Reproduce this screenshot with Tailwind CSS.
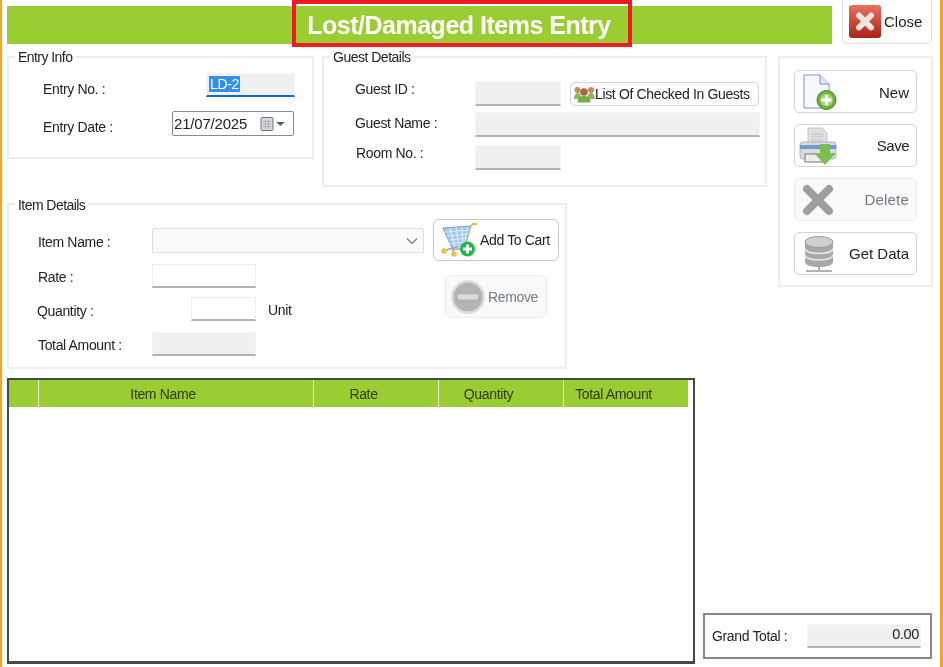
<!DOCTYPE html>
<html><head><meta charset="utf-8"><script src="https://cdn.jsdelivr.net/npm/@tailwindcss/browser@4"></script></head>
<body class="m-0 bg-white">
<div class="relative w-[943px] h-[667px] overflow-hidden bg-white blur-[0.35px] font-['Liberation_Sans',sans-serif] text-[14px] leading-[16px] tracking-[-0.35px] text-[#222]">
  <div class="absolute left-0 top-0 bottom-0 w-[2px] bg-[#f5a623]"></div>
  <div class="absolute right-0 top-0 bottom-0 w-[3px] bg-[#f5a623]"></div>

  <div class="pl-[7px] flex flex-col h-full">
    <!-- header -->
    <div class="flex h-[56px] shrink-0">
      <div class="relative w-[825px] h-[38px] mt-[6px] bg-[#9acd32] shrink-0">
        <div class="absolute left-[285px] top-[-6px] w-[340px] h-[47px] border-[4px] border-[#ed1c24] flex items-center justify-center pr-[6px] pt-[3px] text-white font-bold text-[25px] tracking-[-0.5px]">Lost/Damaged Items Entry</div>
      </div>
      <button class="ml-[10px] w-[90px] h-[45px] -mt-px bg-white border border-[#dcdcdc] rounded-b-[5px] flex items-center pl-[6px] gap-[3px] text-[15px] tracking-[0px]">
        <svg width="32" height="33" viewBox="0 0 32 33"><defs><linearGradient id="r" x1="0" y1="0" x2="0" y2="1"><stop offset="0" stop-color="#e8705f"/><stop offset="1" stop-color="#aa2318"/></linearGradient></defs><rect width="32" height="33" rx="3" fill="url(#r)"/><path d="M10 10.5L22 22.5M22 10.5L10 22.5" stroke="#f3e3e0" stroke-width="6" stroke-linecap="round"/></svg>
        <span>Close</span>
      </button>
    </div>

    <!-- upper area -->
    <div class="flex h-[322px] shrink-0">
      <div class="w-[760px] shrink-0 flex flex-col">
        <div class="flex items-start gap-[8px]">
          <!-- entry info -->
          <div class="relative w-[307px] h-[103px] border-2 border-[#ececec] pt-[15px] pl-[34px]">
            <span class="absolute left-[6px] top-[-9px] bg-white px-[3px] tracking-[-0.55px]">Entry Info</span>
            <div class="flex items-center h-[24px]">
              <span class="w-[163px] pt-[8px]">Entry No. :</span>
              <div class="w-[89px] h-[24px] bg-[#f0f0f0] border border-[#f4f4f4] border-b-2 border-b-[#0a6cc4] pl-[2px] pt-[2px]"><span class="inline-block bg-[#3390ec] text-white px-[1px] h-[16px]">LD-2</span></div>
            </div>
            <div class="flex items-center h-[25px] mt-[14px]">
              <span class="w-[129px] pt-[7px]">Entry Date :</span>
              <div class="w-[122px] h-[25px] border border-[#8a8a8a] rounded-[2px] flex items-center pl-[1px] text-[15px] tracking-[-0.2px]">
                <span>21/07/2025</span>
                <svg class="ml-[13px]" width="30" height="16" viewBox="0 0 30 16"><rect x="1" y="1.5" width="12" height="13" rx="1" fill="#d8dade" stroke="#6d7278"/><path d="M3 5.5h8M3 8h8M3 10.5h8M5.5 4v9M8.5 4v9" stroke="#a4a9b0" stroke-width=".8"/><path d="M16 6h9l-4.5 4z" fill="#4f6478"/></svg>
              </div>
            </div>
          </div>
          <!-- guest details -->
          <div class="relative w-[445px] h-[131px] border-2 border-[#ececec] pt-[23px] pl-[31px]">
            <span class="absolute left-[6px] top-[-9px] bg-white px-[3px] tracking-[-0.5px]">Guest Details</span>
            <div class="flex items-center h-[25px]">
              <span class="w-[120px] pb-[10px]">Guest ID :</span>
              <div class="w-[86px] h-[25px] bg-[#f0f0f0] border border-[#f4f4f4] border-b-2 border-b-[#b4b4b4]"></div>
              <button class="ml-[9px] w-[189px] h-[24px] bg-white border border-[#d4d4d4] rounded-[5px] flex items-center pl-[3px] gap-0">
                <svg width="21" height="18" viewBox="0 0 21 18"><circle cx="3.500" cy="5" r="3" fill="#c98a5a"/><circle cx="17" cy="5" r="3" fill="#c98a5a"/><path d="M0 14c0-4 1.500-6 3.500-6s4 2 4 6zM13 14c0-4 2-6 4-6s4 2 4 6z" fill="#8cb85a"/><circle cx="10" cy="7" r="3.800" fill="#a9683f"/><path d="M3.500 17.500c0-4.500 3-6.500 6.500-6.500s6.500 2 6.500 6.500z" fill="#78ac44"/></svg>
                <span>List Of Checked In Guests</span>
              </button>
            </div>
            <div class="flex items-center h-[25px] mt-[6px]">
              <span class="w-[120px] pb-[3px]">Guest Name :</span>
              <div class="w-[285px] h-[25px] bg-[#f0f0f0] border border-[#f4f4f4] border-b-2 border-b-[#b4b4b4]"></div>
            </div>
            <div class="flex items-center h-[25px] mt-[8px]">
              <span class="w-[120px] pb-[9px] pl-[1px]">Room No. :</span>
              <div class="w-[86px] h-[25px] bg-[#f0f0f0] border border-[#f4f4f4] border-b-2 border-b-[#b4b4b4]"></div>
            </div>
          </div>
        </div>

        <!-- item details -->
        <div class="relative mt-[16px] w-[560px] h-[166px] border-2 border-[#ececec] pl-[29px] flex">
          <span class="absolute left-[6px] top-[-8px] bg-white px-[3px] tracking-[-0.55px]">Item Details</span>
          <div class="w-[395px] shrink-0 pt-[23px]">
            <div class="flex items-center h-[25px]">
              <span class="w-[114px] pt-[2px]">Item Name :</span>
              <div class="w-[272px] h-[25px] bg-[#fafafa] border border-[#dedede] rounded-[2px] flex items-center justify-end pr-[5px]">
                <svg width="12" height="8" viewBox="0 0 12 8"><path d="M1 1.5l5 5 5-5" fill="none" stroke="#777" stroke-width="1.1"/></svg>
              </div>
            </div>
            <div class="flex items-center h-[24px] mt-[11px]">
              <span class="w-[114px] pt-[2px]">Rate :</span>
              <div class="w-[104px] h-[24px] bg-white border border-[#ececec] border-b-2 border-b-[#b4b4b4]"></div>
            </div>
            <div class="flex items-center h-[24px] mt-[9px]">
              <span class="w-[154px] -ml-[1px] pt-[4px]">Quantity :</span>
              <div class="w-[65px] h-[24px] bg-white border border-[#ececec] border-b-2 border-b-[#b4b4b4]"></div>
              <span class="ml-[12px] pt-[2px]">Unit</span>
            </div>
            <div class="flex items-center h-[24px] mt-[11px]">
              <span class="w-[114px] pt-[2px]">Total Amount :</span>
              <div class="w-[104px] h-[24px] bg-[#f0f0f0] border border-[#f4f4f4] border-b-2 border-b-[#b4b4b4]"></div>
            </div>
          </div>
          <div class="pt-[14px] flex flex-col">
            <button class="w-[126px] h-[42px] bg-white border border-[#c4c4c4] rounded-[6px] flex items-center pl-[7px] gap-[1px]">
              <svg width="38" height="36" viewBox="0 0 38 36"><path d="M2 6l28-2-6 20-13 2z" fill="#a4c8ea" stroke="#6f9fcc"/><path d="M4 10l25-2M6 14l22-2M8 18l18-2M9 22l15-2M9 6l5 19M15 5l3 20M21 5l1 19M26 5l-2 18" stroke="#deecf8" stroke-width="1.100"/><path d="M29 5l3-3h4" fill="none" stroke="#e4bc50" stroke-width="2"/><path d="M11 26l-8 3M11 26l2 5M11 27h12" stroke="#a0a0a0" stroke-width="1.500"/><circle cx="3" cy="29" r="2.800" fill="#eec23c"/><circle cx="13" cy="32" r="2.800" fill="#eec23c"/><circle cx="26.500" cy="27" r="7.500" fill="#1fb848"/><path d="M26.500 22.500v9M22 27h9" stroke="#fff" stroke-width="2.800"/></svg>
              <span>Add To Cart</span>
            </button>
            <button class="ml-[12px] mt-[14px] w-[102px] h-[43px] bg-[#f9f9f9] border border-[#ececec] rounded-[5px] flex items-center pl-[4px] gap-[2px] text-[#6f7a85]">
              <svg width="36" height="36" viewBox="0 0 36 36"><circle cx="18" cy="18" r="17" fill="#dedede"/><circle cx="18" cy="18" r="14.5" fill="#b4b4b4"/><rect x="8" y="15.5" width="20" height="5" rx="1" fill="#dcdcdc"/></svg>
              <span class="pt-[1px]">Remove</span>
            </button>
          </div>
        </div>
      </div>

      <!-- action panel -->
      <div class="ml-[11px] w-[155px] h-[231px] border-2 border-[#ececec] pl-[14px] pt-[12px] flex flex-col text-[15px] tracking-[0px]">
        <button class="w-[123px] h-[43px] shrink-0 bg-white border border-[#d4d4d4] rounded-[5px] flex items-center justify-between pl-[8px] pr-[7px]">
          <svg width="34" height="36" viewBox="0 0 34 36"><path d="M1 1h16l9 9v24H1z" fill="#f6f8fc" stroke="#7d92c4"/><path d="M17 1v9h9" fill="#dfe6f4" stroke="#7d92c4"/><circle cx="23.500" cy="26" r="9.500" fill="#6fae3a" stroke="#4c8a26"/><circle cx="23.500" cy="26" r="6.500" fill="#a6d27a"/><path d="M23.500 21v10M18.500 26h10" stroke="#fff" stroke-width="3"/></svg>
          <span class="pt-[2px]">New</span>
        </button>
        <button class="mt-[11px] w-[123px] h-[43px] shrink-0 bg-white border border-[#d4d4d4] rounded-[5px] flex items-center justify-between pl-[4px] pr-[7px]">
          <svg width="38" height="38" viewBox="0 0 38 38"><path d="M9 1h14l5 5v13H9z" fill="#e0e0e0" stroke="#c4c4c4"/><path d="M12 7h12M12 10h12M12 13h12" stroke="#c4c4c4"/><rect x="1" y="15" width="36" height="17" rx="3" fill="#d8dde3" stroke="#aab2bc"/><rect x="1" y="18" width="36" height="4" fill="#6f9bd0"/><rect x="6" y="27" width="20" height="8" fill="#eee" stroke="#777"/><path d="M21 17h10v9h6L26 38 15 26h6z" fill="#7cc04c"/></svg>
          <span class="tracking-[-0.5px]">Save</span>
        </button>
        <button class="mt-[11px] w-[123px] h-[43px] shrink-0 bg-[#f9f9f9] border border-[#ececec] rounded-[5px] flex items-center justify-between pl-[7px] pr-[7px] text-[#6f7a85]">
          <svg width="32" height="32" viewBox="0 0 32 32"><path d="M5 5L27 27M27 5L5 27" stroke="#9e9e9e" stroke-width="8" stroke-linecap="round"/></svg>
          <span class="tracking-[0.2px]">Delete</span>
        </button>
        <button class="mt-[11px] w-[123px] h-[43px] shrink-0 bg-white border border-[#d4d4d4] rounded-[5px] flex items-center justify-between pl-[8px] pr-[7px]">
          <svg width="32" height="38" viewBox="0 0 32 38"><path d="M2 7v20c0 3 6 5 14 5s14-2 14-5V7z" fill="#a8a8a8"/><ellipse cx="16" cy="7" rx="14" ry="5.500" fill="#d0d0d0" stroke="#999"/><path d="M2 13.500c0 3 6 5 14 5s14-2 14-5M2 20c0 3 6 5 14 5s14-2 14-5" fill="none" stroke="#e6e6e6" stroke-width="1.600"/><path d="M16 31v4M3 36h26" stroke="#999" stroke-width="1.600"/></svg>
          <span>Get Data</span>
        </button>
      </div>
    </div>

    <!-- lower area -->
    <div class="flex items-end h-[286px] shrink-0">
      <div class="w-[688px] h-[286px] shrink-0 border-2 border-[#484848] border-b-[3px]">
        <div class="grid grid-cols-[30px_275px_125px_125px_124px] w-[679px] h-[27px] bg-[#9acd32] text-[#2f3a1a]">
          <div class="border-r border-[#f0f6e0]"></div>
          <div class="border-r border-[#f0f6e0] flex items-center justify-center pr-[26px]">Item Name</div>
          <div class="border-r border-[#f0f6e0] flex items-center justify-center pr-[25px]">Rate</div>
          <div class="border-r border-[#f0f6e0] flex items-center justify-center pr-[25px]">Quantity</div>
          <div class="flex items-center justify-center pr-[25px]">Total Amount</div>
        </div>
      </div>
      <div class="ml-[8px] mb-[5px] w-[229px] h-[46px] shrink-0 border-2 border-[#888] flex items-center pl-[7px]">
        <span class="w-[95px]">Grand Total :</span>
        <div class="w-[114px] h-[24px] bg-[#f0f0f0] border border-[#f4f4f4] border-b-2 border-b-[#b4b4b4] flex items-center justify-end pr-[1px] pb-[3px] text-[14.5px]">0.00</div>
      </div>
    </div>
  </div>
</div>
</body></html>
